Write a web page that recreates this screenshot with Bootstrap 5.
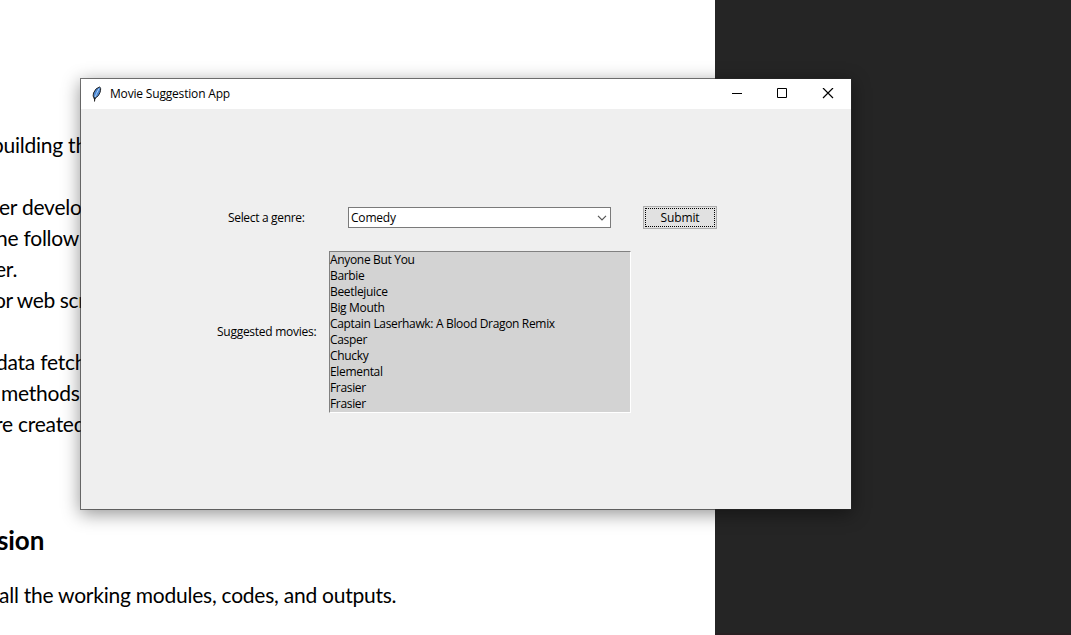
<!DOCTYPE html>
<html lang="en">
<head>
<meta charset="utf-8">
<meta name="viewport" content="width=device-width, initial-scale=1">
<title>Movie Suggestion App</title>
<link href="https://cdn.jsdelivr.net/npm/bootstrap@5.3.0/dist/css/bootstrap.min.css" rel="stylesheet">
<style>
body{background:#252525;font-family:"Open Sans","Noto Sans",sans-serif;color:#000}
.desk{width:1071px;height:635px;background:linear-gradient(#252525 633px,#282022 633px)}
.paper{width:715px;height:635px;background:#fff;padding-top:129px;font:21px/31px Lato,"Open Sans",sans-serif;color:#000;letter-spacing:-.24px}
.paper p,.paper h2{margin:0;height:31px;white-space:pre}
.paper h2{font:bold 26px/31px Lato,sans-serif;letter-spacing:-.1px}
.gap1{margin-top:31px!important}
.win{left:80px;top:78px;width:772px;height:432px;border:1px solid rgba(40,40,40,.62);background:#efefef;background-clip:padding-box;box-shadow:0 4px 17px rgba(0,0,0,.42);font-size:12px;line-height:16px;letter-spacing:-.33px}
.titlebar{height:30px;background:#fff;padding-left:10px;letter-spacing:-.18px}
.titlebar button{width:46px;height:30px;border:0;background:none;padding:0}
.controls{margin-left:136px;margin-top:96px;height:25px}
.genre-label{width:99px;padding-left:11px}
.combo{width:263px;height:21px;border:1px solid #7a7a7a;background:#fff;margin-left:32px;padding:0 3px 0 2px;letter-spacing:-.2px}
.submit{width:74px;height:23px;margin-left:32px;border:1px solid #adadad;background:#e1e1e1;padding:1px;font-size:12px;line-height:16px;letter-spacing:-.15px}
.submit span{height:19px;border:1px dotted #000}
.results{margin-left:136px;margin-top:21px;height:162px}
.movies-label{width:100px;letter-spacing:-.27px}
.movies{width:302px;height:162px;margin-left:12px;background:#d3d3d3;border:1px solid;border-color:#808080 #fff #fff #808080;font-size:12px}
.movies li{height:16px;padding:0;margin:0;white-space:nowrap}
</style>
</head>
<body>
<main class="desk position-relative overflow-hidden">
<article class="paper overflow-hidden">
<p style="text-indent:-8px">building th</p>
<p class="gap1" style="text-indent:-1px">er develo</p>
<p style="text-indent:-4px">he follow</p>
<p style="text-indent:-5px">er.</p>
<p style="text-indent:-6px;letter-spacing:-.4px">or web scr</p>
<p class="gap1" style="text-indent:-4px">data fetch</p>
<p style="text-indent:1px">methods</p>
<p style="text-indent:-5px">re created</p>
<h2 style="margin-top:86px;text-indent:-3px">sion</h2>
<p style="margin-top:23px;text-indent:-1px">all the working modules, codes, and outputs.</p>
</article>
<section class="win position-absolute">
<header class="titlebar d-flex align-items-center">
<svg width="11" height="16" viewBox="0 0 11 16" aria-hidden="true"><path d="M8.500 1Q10.500 1.500 9 6.500Q8 10 4.500 12L3.500 13.500L3 12Q1.500 10.500 2.500 7Q4.500 2 8.500 1Z" fill="#4c86d0" stroke="#222"/><path d="M8 2.500L5.500 7.500L4 11.500" fill="none" stroke="#a5cef8"/><path d="M4 11L3.500 15.500" fill="none" stroke="#111"/></svg>
<span class="ms-2 me-auto">Movie Suggestion App</span>
<button aria-label="Minimize"><svg class="d-block mx-auto" width="12" height="12"><path d="M2 5.500H12" stroke="#000"/></svg></button>
<button aria-label="Maximize"><svg class="d-block mx-auto" width="12" height="12"><path d="M1.500 .5H10.500V9.500H1.500Z" fill="none" stroke="#000"/></svg></button>
<button aria-label="Close"><svg class="d-block mx-auto" width="12" height="12"><path d="M1 0L11 10M11 0L1 10" stroke="#000" stroke-width="1.200"/></svg></button>
</header>
<div class="controls d-flex align-items-center">
<label class="genre-label">Select a genre:</label>
<div class="combo d-flex align-items-center justify-content-between"><span>Comedy</span><svg width="10" height="6" viewBox="0 0 10 6"><path d="M1 .8L5 4.800L9 .8" fill="none" stroke="#555" stroke-width="1.200"/></svg></div>
<button class="submit"><span class="d-flex align-items-center justify-content-center">Submit</span></button>
</div>
<div class="results d-flex align-items-center">
<span class="movies-label">Suggested movies:</span>
<ul class="movies list-unstyled mb-0"><li>Anyone But You</li><li>Barbie</li><li>Beetlejuice</li><li>Big Mouth</li><li>Captain Laserhawk: A Blood Dragon Remix</li><li>Casper</li><li>Chucky</li><li>Elemental</li><li>Frasier</li><li>Frasier</li></ul>
</div>
</section>
</main>
<script src="https://cdn.jsdelivr.net/npm/bootstrap@5.3.0/dist/js/bootstrap.bundle.min.js"></script>
</body>
</html>
